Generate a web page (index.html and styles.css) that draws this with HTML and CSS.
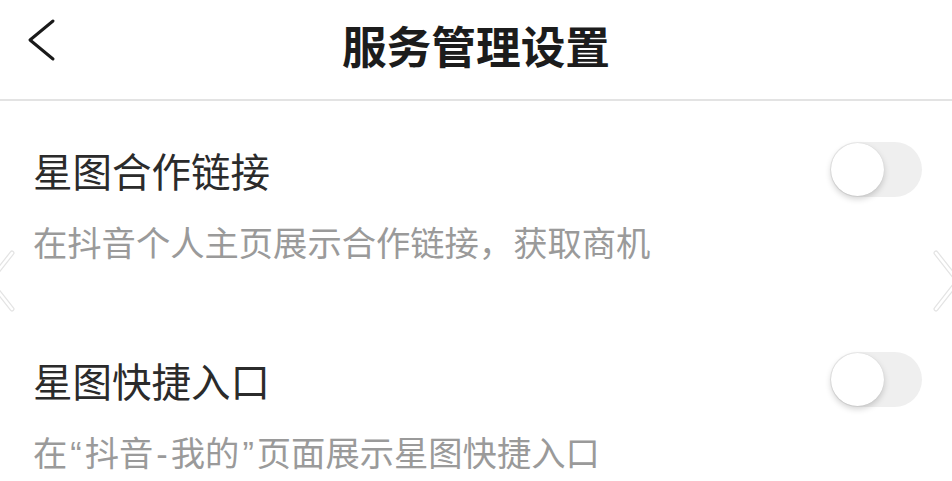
FILE: index.html
```html
<!DOCTYPE html>
<html lang="zh-CN">
<head>
<meta charset="utf-8">
<title>服务管理设置</title>
<link rel="stylesheet" href="styles.css">
</head>
<body>
<div class="page">
  <header class="header">
    <svg class="back" width="32" height="44" viewBox="0 0 32 44">
      <polyline points="27,3 4,22 27,41" fill="none" stroke="#1a1a1a" stroke-width="3" stroke-linecap="round" stroke-linejoin="round"/>
    </svg>
    <h1 class="title">服务管理设置</h1>
  </header>
  <main class="list">
    <section class="item">
      <div class="item-head">
        <div class="item-title">星图合作链接</div>
        <div class="switch"><span class="knob"></span></div>
      </div>
      <div class="item-desc">在抖音个人主页展示合作链接，获取商机</div>
    </section>
    <section class="item">
      <div class="item-head">
        <div class="item-title">星图快捷入口</div>
        <div class="switch"><span class="knob"></span></div>
      </div>
      <div class="item-desc">在<span class="q">“</span>抖音<span class="q">-</span>我的<span class="q">”</span>页面展示星图快捷入口</div>
    </section>
  </main>
  <svg class="edge edge-left" width="16" height="64" viewBox="0 0 16 64">
    <polyline points="12,4 -10,32 12,60" fill="none" stroke="#e4e4e4" stroke-width="5" stroke-linecap="round" stroke-linejoin="round"/>
    <polyline points="12,4 -10,32 12,60" fill="none" stroke="#ffffff" stroke-width="2.5" stroke-linecap="round" stroke-linejoin="round"/>
  </svg>
  <svg class="edge edge-right" width="20" height="64" viewBox="0 0 20 64">
    <polyline points="4,4 26,32 4,60" fill="none" stroke="#e4e4e4" stroke-width="5" stroke-linecap="round" stroke-linejoin="round"/>
    <polyline points="4,4 26,32 4,60" fill="none" stroke="#ffffff" stroke-width="2.5" stroke-linecap="round" stroke-linejoin="round"/>
  </svg>
</div>
</body>
</html>
```
FILE: styles.css
```css
* { box-sizing: border-box; }
html, body { margin: 0; padding: 0; background: #ffffff; }
body {
  font-family: "Noto Sans CJK SC", "Noto Sans", sans-serif;
  width: 952px;
  height: 481px;
  overflow: hidden;
}
.page {
  position: relative;
  width: 952px;
  height: 481px;
}
.header {
  position: relative;
  height: 101px;
  display: flex;
  align-items: center;
  justify-content: center;
  border-bottom: 2px solid #e3e3e3;
  padding-bottom: 10px;
}
.back {
  position: absolute;
  left: 26px;
  top: 18px;
}
.title {
  margin: 0;
  font-size: 44.7px;
  font-weight: 700;
  color: #1c1c1c;
  line-height: 60px;
}
.list {
  padding: 45px 30px 0 33px;
  display: flex;
  flex-direction: column;
  gap: 95px;
}
.item {
  display: flex;
  flex-direction: column;
}
.item-head {
  display: flex;
  align-items: flex-start;
  justify-content: space-between;
}
.item-title {
  font-size: 39.5px;
  line-height: 48px;
  color: #2b2b2b;
}
.item-desc {
  margin-top: 24px;
  font-size: 34.3px;
  line-height: 40px;
  color: #9a9a9a;
}
.q {
  font-family: "Liberation Sans", sans-serif;
  padding: 0 3px;
}
.switch {
  position: relative;
  width: 92px;
  height: 55px;
  margin-top: -4px;
  border-radius: 28px;
  background: #efefef;
}
.knob {
  position: absolute;
  left: 1px;
  top: 1px;
  width: 53px;
  height: 53px;
  border-radius: 50%;
  background: #ffffff;
  box-shadow: 0 3px 6px rgba(0,0,0,0.18), 0 0 1px rgba(0,0,0,0.12);
}
.edge {
  position: absolute;
  top: 249px;
}
.edge-left { left: 0; }
.edge-right { right: 0; }
```
